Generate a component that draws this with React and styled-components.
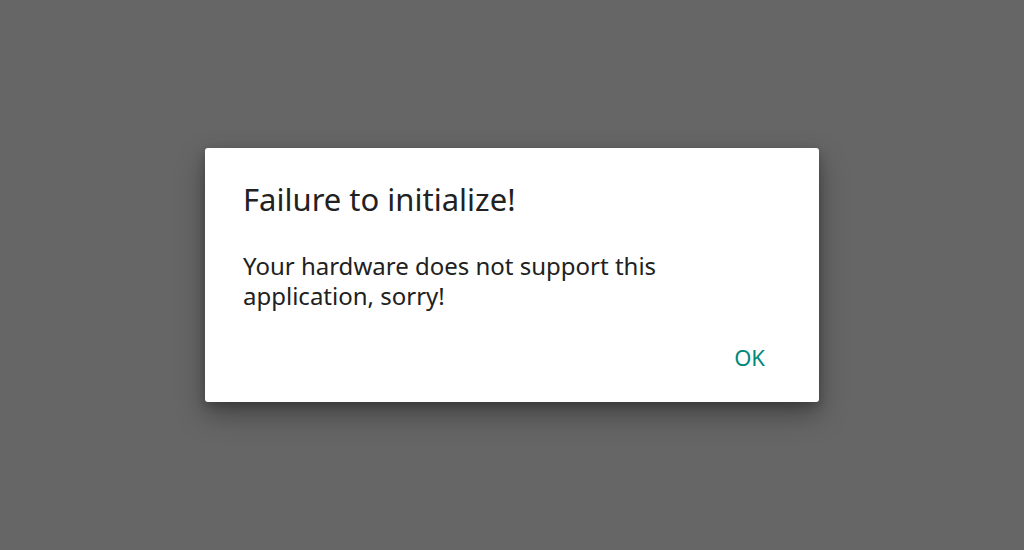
import styled, { createGlobalStyle } from "styled-components";

const GlobalStyle = createGlobalStyle`
  html, body {
    margin: 0;
    padding: 0;
    background: #666666;
  }
  body {
    font-family: "Noto Sans", "DejaVu Sans", sans-serif;
  }
`;

const Backdrop = styled.div`
  width: 1024px;
  height: 550px;
  background: #666666;
  display: flex;
  align-items: flex-start;
  justify-content: center;
  padding-top: 148px;
  box-sizing: border-box;
`;

const Dialog = styled.div`
  width: 614px;
  height: 254px;
  background: #ffffff;
  border-radius: 3px;
  box-shadow: 0 12px 28px rgba(0, 0, 0, 0.35), 0 4px 10px rgba(0, 0, 0, 0.2);
  padding: 30px 38px 0 38px;
  box-sizing: border-box;
  display: flex;
  flex-direction: column;
`;

const Title = styled.h2`
  margin: 0;
  font-size: 31px;
  font-weight: 400;
  line-height: 42px;
  color: #212121;
`;

const Message = styled.p`
  margin: 31px 0 0 0;
  font-size: 24px;
  line-height: 30px;
  color: #212121;
`;

const Actions = styled.div`
  display: flex;
  justify-content: flex-end;
  margin-top: 27px;
`;

const Button = styled.button`
  border: none;
  background: none;
  font-family: inherit;
  font-size: 22px;
  color: #00897b;
  padding: 4px 16px;
  cursor: pointer;
`;

const App = () => {
  return (
    <>
      <GlobalStyle />
      <Backdrop>
        <Dialog>
          <Title>Failure to initialize!</Title>
          <Message>
            Your hardware does not support this
            <br />
            application, sorry!
          </Message>
          <Actions>
            <Button>OK</Button>
          </Actions>
        </Dialog>
      </Backdrop>
    </>
  );
};

export default App;
